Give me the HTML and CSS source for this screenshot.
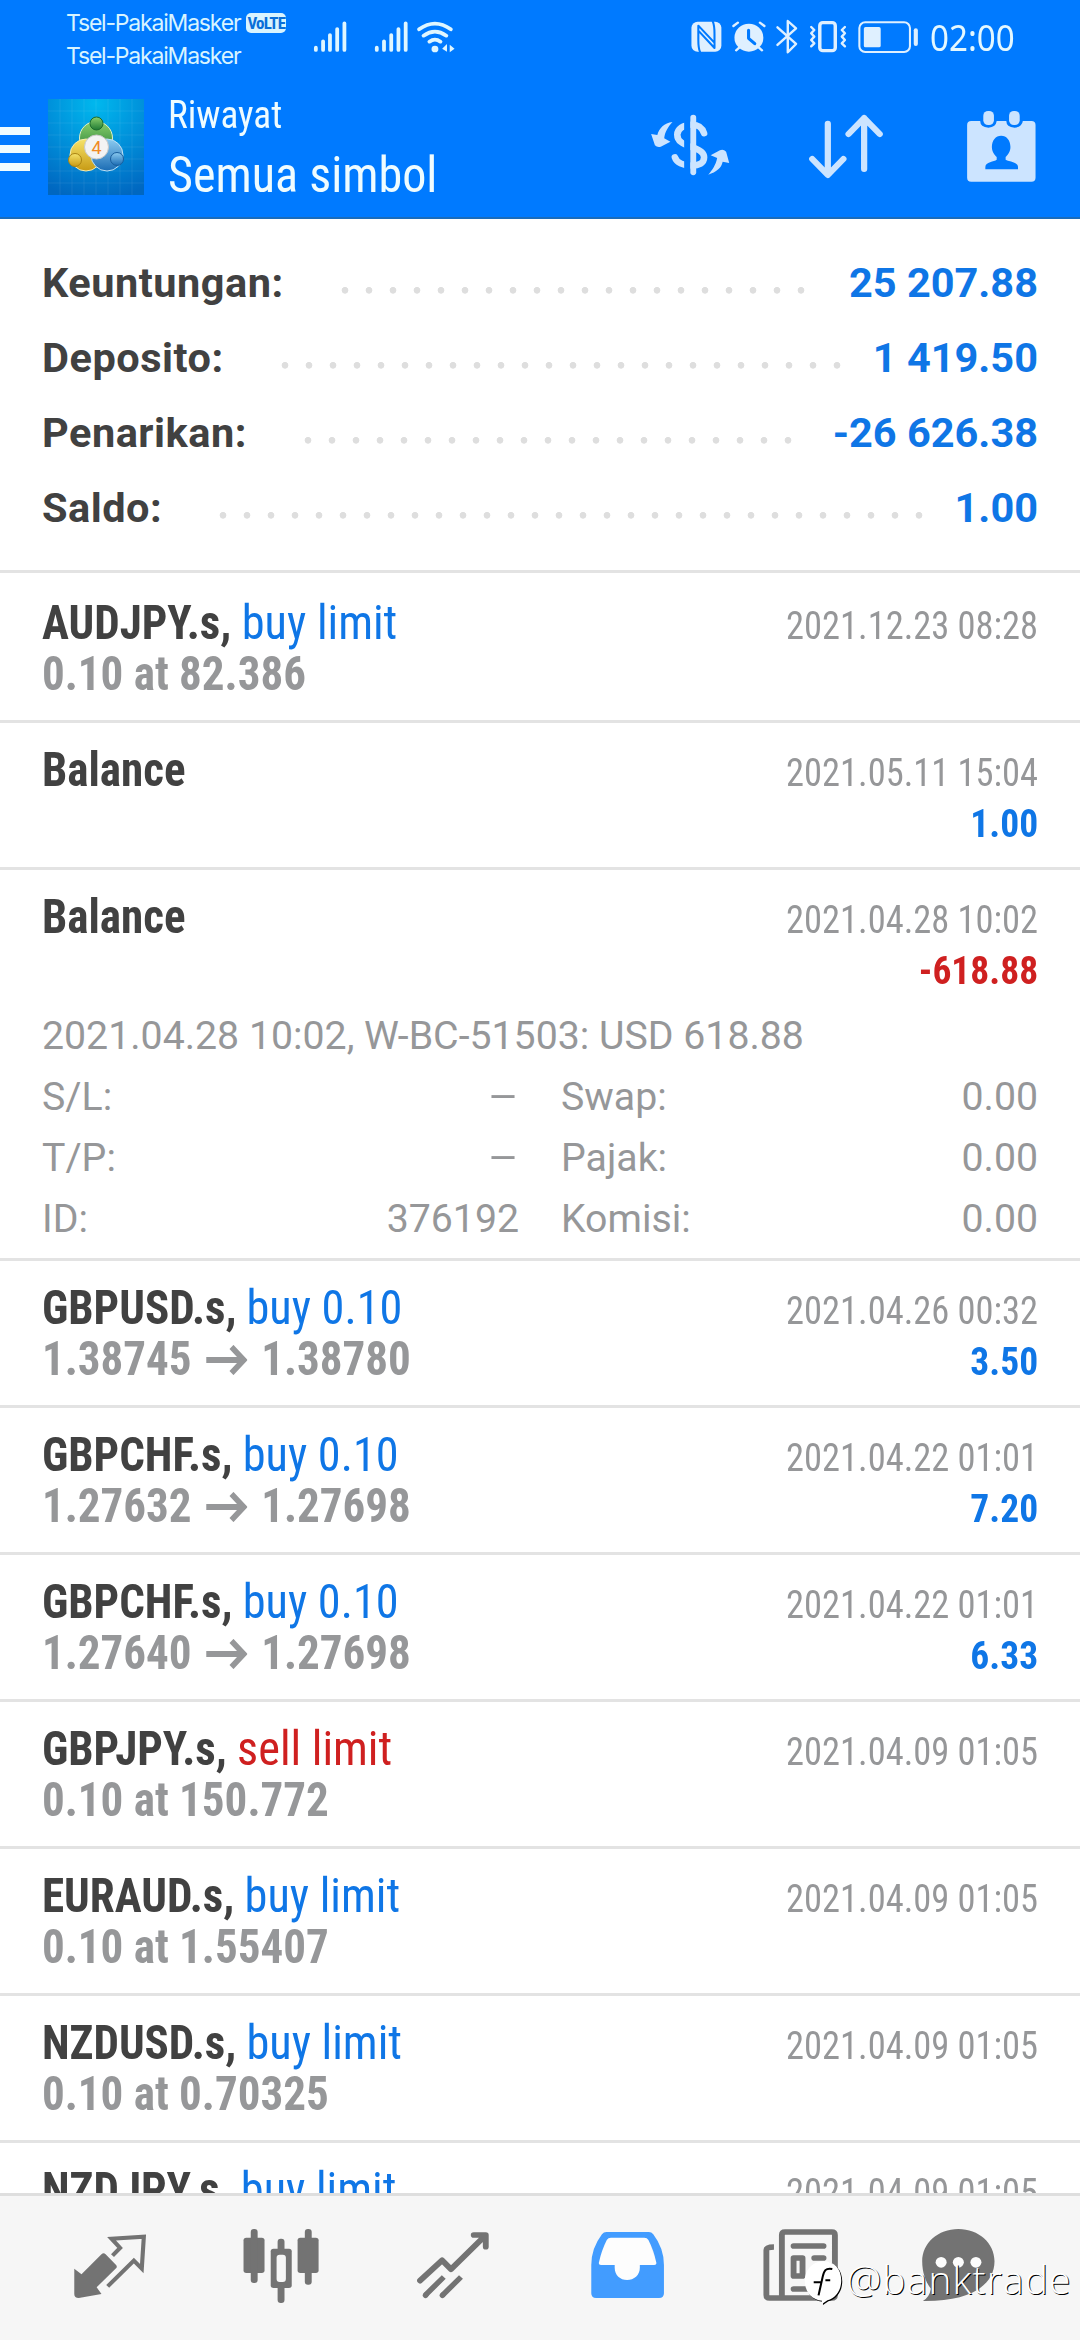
FILE: index.html
```html
<!DOCTYPE html>
<html lang="id">
<head>
<meta charset="utf-8">
<title>Riwayat</title>
<link rel="stylesheet" href="styles.css">
</head>
<body>
<div class="screen">
<header class="top">
  <div class="status">
    <div class="carriers">
      <div class="carrier"><span>Tsel-PakaiMasker</span><span class="volte">VoLTE</span></div>
      <div class="carrier"><span>Tsel-PakaiMasker</span></div>
    </div>
    <svg class="signals" viewBox="900 55 430 110" preserveAspectRatio="none" fill="none" stroke="#dff6ff" stroke-linecap="round" stroke-width="11">
      <path d="M917 144v7M938 125v26M958 106v45M979 88v63M1000 71v80M1094 144v7M1115 125v26M1136 106v45M1157 88v63M1178 71v80"/>
      <path d="M1217 89Q1263 55 1309 89M1230 108Q1263 84 1296 108M1247 126Q1263 114 1279 126"/>
      <circle cx="1263" cy="148" r="10" fill="#dff6ff" stroke="none"/>
      <path d="M1284 147l14-14v23zM1320 147l-14-12v23z" fill="#dff6ff" stroke="none"/>
    </svg>
    <svg class="sysicons" viewBox="430 55 680 115" preserveAspectRatio="none" fill="none" stroke="#dff0ff" stroke-linecap="round" stroke-linejoin="round" stroke-width="7">
      <rect x="440" y="66" width="87" height="90" rx="18" fill="#dff0ff" stroke="none"/>
      <path d="M465 157Q460 145 460 120V78L506 128M502 65Q507 77 507 102V145L462 95" stroke="#007aff" stroke-width="6"/>
      <circle cx="607" cy="114" r="42" fill="#dff0ff" stroke="none"/>
      <path d="M562 79l13-10M652 79l-13-10M570 152l8-7M645 152l-8-7"/>
      <path d="M606 92v24l18 16" stroke="#007aff" stroke-width="9"/>
      <path d="M690 83l54 50-24 25V64l24 22-54 50"/>
      <rect x="813" y="69" width="45" height="84" rx="9" stroke-width="10"/>
      <path d="M788 82l9 9-9 10 9 10-9 10 9 10-9 9M886 82l-9 9 9 10-9 10 9 10-9 10 9 9"/>
      <rect x="928" y="68" width="147" height="89" rx="17" stroke-width="6"/>
      <rect x="941" y="82" width="49" height="61" rx="5" fill="#dff0ff" stroke="none"/>
      <path d="M1092 92v41" stroke-width="12"/>
    </svg>
    <span class="clock">02:00</span>
  </div>
  <div class="appbar">
    <div class="menu"><i></i><i></i><i></i></div>
    <svg class="logo" viewBox="0 0 96 96">
      <defs>
        <radialGradient id="bg" cx=".5" cy=".05" r="1"><stop offset="0" stop-color="#00b8ee"/><stop offset=".55" stop-color="#008cd8"/><stop offset="1" stop-color="#0067c0"/></radialGradient>
        <linearGradient id="gr" x2="0" y2="1"><stop stop-color="#8bd06c"/><stop offset="1" stop-color="#1f7a34"/></linearGradient>
        <linearGradient id="ye" x2="0" y2="1"><stop stop-color="#f6e36a"/><stop offset="1" stop-color="#c79a14"/></linearGradient>
        <linearGradient id="bl" x2="0" y2="1"><stop stop-color="#8ccbf0"/><stop offset="1" stop-color="#1b6cb4"/></linearGradient>
      </defs>
      <rect width="96" height="96" fill="url(#bg)"/>
      <path d="M12 0v96M24 0v96M36 0v96M48 0v96M60 0v96M72 0v96M84 0v96M0 12h96M0 24h96M0 36h96M0 48h96M0 60h96M0 72h96M0 84h96" stroke="#fff" stroke-opacity=".07"/>
      <g stroke-width="1">
        <circle cx="48" cy="39" r="16.500" fill="url(#gr)" stroke="#dff0c8"/>
        <circle cx="38" cy="56" r="16" fill="url(#ye)" stroke="#f5ecb0"/>
        <circle cx="59" cy="56" r="16" fill="url(#bl)" stroke="#bfe2f5"/>
        <circle cx="48.500" cy="24.500" r="6.500" fill="url(#gr)" stroke="#1c6a2c"/>
        <circle cx="27" cy="61" r="6.500" fill="url(#ye)" stroke="#a98312"/>
        <circle cx="69" cy="60" r="6.500" fill="url(#bl)" stroke="#185d9c"/>
        <circle cx="48.500" cy="48" r="12" fill="#f3f3f3" stroke="#c8c8c8"/>
      </g>
      <text x="48.500" y="54.500" text-anchor="middle" class="logo-digit">4</text>
    </svg>
    <div class="titles">
      <div class="t1"><span class="cond">Riwayat</span></div>
      <div class="t2"><span class="cond">Semua simbol</span></div>
    </div>
    <svg class="act dollar" viewBox="310 330 250 220" preserveAspectRatio="none">
      <path d="M476 400C470 380 455 374 440 374C415 374 398 388 398 404C398 424 415 432 436 440C462 448 476 458 476 472C476 490 460 497 440 497C415 497 396 488 391 472" fill="none" stroke="#cce4ff" stroke-width="19" stroke-linecap="round"/>
      <path d="M418 340h18v200h-18z" fill="#007aff"/>
      <path d="M444.500 353v164" stroke="#cce4ff" stroke-width="17" stroke-linecap="round"/>
      <path d="M384 366C360 368 345 385 340 405L322 402L333 436Q340 443 350 440L378 425L360 415C362 395 372 380 384 366ZM488 524C512 515 526 505 530 485L549 489L540 455Q532 447 522 451L495 466L514 474C510 495 500 510 488 524Z" fill="#cce4ff"/>
    </svg>
    <svg class="act sort" viewBox="770 330 240 220" preserveAspectRatio="none" fill="none" stroke="#cce4ff" stroke-width="18" stroke-linecap="round" stroke-linejoin="round">
      <path d="M836 371V524M791 477l45 48 45-48M941 507V354M896 402l45-48 45 48"/>
    </svg>
    <svg class="act cal" viewBox="1230 320 224 240" preserveAspectRatio="none" fill="#cce4ff">
      <path d="M1254 362h26q0 18 24 20 22-2 24-20h28q0 18 24 20 22-2 24-20h25q12 0 12 12v158q0 12-12 12h-175q-12 0-12-12v-158q0-12 12-12z"/>
      <rect x="1289" y="332" width="31" height="42" rx="14"/><rect x="1364" y="332" width="31" height="42" rx="14"/>
      <path d="M1341 406c16 0 27 14 27 34 0 14-8 24-14 30v8c10 6 36 6 36 22v7h-95v-7c0-16 26-16 33-22v-8c-6-6-14-16-14-30 0-20 11-34 27-34z" fill="#007aff"/>
    </svg>
  </div>
</header>

<section class="stats">
  <div class="stat"><span>Keuntungan:</span><i class="dots"></i><b>25 207.88</b></div>
  <div class="stat"><span>Deposito:</span><i class="dots"></i><b>1 419.50</b></div>
  <div class="stat"><span>Penarikan:</span><i class="dots"></i><b>-26 626.38</b></div>
  <div class="stat"><span>Saldo:</span><i class="dots"></i><b>1.00</b></div>
</section>

<main class="list">
  <article class="row first"><div class="main"><div class="l"><div><b>AUDJPY.s,</b> <span class="buy">buy limit</span></div><div class="price">0.10 at 82.386</div></div><div class="r"><div>2021.12.23 08:28</div></div></div></article>
  <article class="row"><div class="main"><div class="l"><div><b>Balance</b></div></div><div class="r"><div>2021.05.11 15:04</div><div class="amt">1.00</div></div></div></article>
  <article class="row open"><div class="main"><div class="l"><div><b>Balance</b></div></div><div class="r"><div>2021.04.28 10:02</div><div class="amt neg">-618.88</div></div></div>
    <div class="detail">
      <div class="note">2021.04.28 10:02, W-BC-51503: USD 618.88</div>
      <div class="kv"><span>S/L:</span><span class="dash">–</span></div><div class="kv"><span>Swap:</span><span>0.00</span></div>
      <div class="kv"><span>T/P:</span><span class="dash">–</span></div><div class="kv"><span>Pajak:</span><span>0.00</span></div>
      <div class="kv"><span>ID:</span><span>376192</span></div><div class="kv"><span>Komisi:</span><span>0.00</span></div>
    </div>
  </article>
  <article class="row"><div class="main"><div class="l"><div><b>GBPUSD.s,</b> <span class="buy">buy 0.10</span></div><div class="price">1.38745 <svg class="arrow" viewBox="0 0 44 30"><path d="M0 15h40M27 2l13 13-13 13"/></svg> 1.38780</div></div><div class="r"><div>2021.04.26 00:32</div><div class="amt">3.50</div></div></div></article>
  <article class="row"><div class="main"><div class="l"><div><b>GBPCHF.s,</b> <span class="buy">buy 0.10</span></div><div class="price">1.27632 <svg class="arrow" viewBox="0 0 44 30"><path d="M0 15h40M27 2l13 13-13 13"/></svg> 1.27698</div></div><div class="r"><div>2021.04.22 01:01</div><div class="amt">7.20</div></div></div></article>
  <article class="row"><div class="main"><div class="l"><div><b>GBPCHF.s,</b> <span class="buy">buy 0.10</span></div><div class="price">1.27640 <svg class="arrow" viewBox="0 0 44 30"><path d="M0 15h40M27 2l13 13-13 13"/></svg> 1.27698</div></div><div class="r"><div>2021.04.22 01:01</div><div class="amt">6.33</div></div></div></article>
  <article class="row"><div class="main"><div class="l"><div><b>GBPJPY.s,</b> <span class="sell">sell limit</span></div><div class="price">0.10 at 150.772</div></div><div class="r"><div>2021.04.09 01:05</div></div></div></article>
  <article class="row"><div class="main"><div class="l"><div><b>EURAUD.s,</b> <span class="buy">buy limit</span></div><div class="price">0.10 at 1.55407</div></div><div class="r"><div>2021.04.09 01:05</div></div></div></article>
  <article class="row"><div class="main"><div class="l"><div><b>NZDUSD.s,</b> <span class="buy">buy limit</span></div><div class="price">0.10 at 0.70325</div></div><div class="r"><div>2021.04.09 01:05</div></div></div></article>
  <article class="row"><div class="main"><div class="l"><div><b>NZDJPY.s,</b> <span class="buy">buy limit</span></div></div><div class="r"><div>2021.04.09 01:05</div></div></div></article>
</main>

<nav class="nav">
  <svg viewBox="70 300 500 270" preserveAspectRatio="none" fill="#737373">
    <path d="M216 446l21 17 58-60q6-6 12 0l31 33q3 4 0 8l-57 58 14 20-66 12q-13 0-13-12z"/>
    <path d="M327 407l22-23-25-28 94-6-6 96-23-24-76 77" fill="none" stroke="#737373" stroke-width="12"/>
  </svg>
  <svg viewBox="570 300 500 270" preserveAspectRatio="none" fill="#737373">
    <rect x="708" y="353" width="61" height="106" rx="8"/><rect x="729" y="327" width="20" height="162" rx="9"/>
    <rect x="865" y="353" width="61" height="106" rx="8"/><rect x="886" y="327" width="20" height="167" rx="9"/>
    <rect x="807" y="356" width="20" height="193" rx="9"/><rect x="787" y="386" width="61" height="118" rx="8"/>
    <rect x="804" y="404" width="27" height="82" rx="9" fill="#f6f6f6"/>
  </svg>
  <svg viewBox="1070 300 500 270" preserveAspectRatio="none" fill="none" stroke="#737373" stroke-width="16" stroke-linejoin="round">
    <path d="M1221 482L1285 421L1311 448L1410 347M1377 345H1412V380" stroke-linecap="round" stroke-width="17"/>
    <path d="M1290 471l-54 55M1340 471l-54 55"/><path d="M1238 525l-1 1M1287 525l-1 1" stroke-linecap="round"/>
  </svg>
  <svg viewBox="0 300 500 270" preserveAspectRatio="none" fill="#429cff">
    <path fill="#fdfdfd" d="M195 350H308L340 440H290L280 484H220L210 440H160Z"/>
    <path fill-rule="evenodd" d="M190 336H313Q321 336 326 343Q357 385 357 435V520Q357 534 343 534H160Q146 534 146 520V435Q146 385 177 343Q182 336 190 336ZM203 353Q195 353 191 360Q176 390 168 428Q167 435 174 435H214V443C214 465 230 480 250 480C270 480 287 465 287 443V435H329Q336 435 335 428Q327 390 312 360Q308 353 300 353Z"/>
  </svg>
  <svg viewBox="500 300 500 270" preserveAspectRatio="none" fill="none" stroke="#737373" stroke-width="17" stroke-linejoin="round">
    <path d="M700 534V345q0-9 9-9h136q9 0 9 9v180q0 9-9 9H664q-9 0-9-9V390q0-9 22-9" />
    <path d="M734 378h87M794 414h27" stroke-linecap="round"/>
    <rect x="734" y="414" width="26" height="54"/><path d="M734 507h87" stroke-linecap="round"/>
  </svg>
  <svg viewBox="1000 300 500 270" preserveAspectRatio="none" fill="#737373">
    <path d="M1213 327C1272 327 1318 369 1318 424C1318 500 1240 545 1110 543Q1130 530 1133 506C1118 485 1108 458 1108 424C1108 369 1154 327 1213 327Z"/>
    <g fill="#fdfdfd"><circle cx="1163" cy="427" r="16"/><circle cx="1213" cy="427" r="16"/><circle cx="1264" cy="427" r="16"/></g>
  </svg>
</nav>
<div class="mark">
  <svg viewBox="760 415 122 145" preserveAspectRatio="none"><path d="M822 425c32 0 52 24 52 57s-18 55-40 61l-16 11 0-10c-30-2-50-28-50-60s22-59 54-59z" fill="#fff"/><path d="M848 448c-20-4-24 6-28 24l-12 56M794 488h20M828 482h14" fill="none" stroke="#000" stroke-width="6"/></svg>
  <span>@banktrade</span>
</div>
</div>
</body>
</html>
```
FILE: styles.css
```css
* { box-sizing: border-box; }
body { margin: 0; background: #fff; }
.screen {
  position: relative;
  width: 1080px;
  height: 2340px;
  overflow: hidden;
  display: flex;
  flex-direction: column;
  font-family: Roboto, "Liberation Sans", sans-serif;
  color: #414141;
}
svg { display: block; flex: none; }
.cond, .l, .r { font-family: "Roboto Condensed", Roboto, sans-serif; font-stretch: 75%; }

.top { flex: none; height: 219px; background: #007aff; border-bottom: 2px solid #1a6cbb; color: #effcff; }
.status { display: flex; height: 73px; }
.carriers { width: 244px; margin-left: 66px; padding-top: 7px; flex: none; }
.carrier { display: flex; align-items: center; height: 32.500px; font: 23px/32px Inter, sans-serif; letter-spacing: -1.200px; white-space: nowrap; color: #d8f4ff; }
.volte { margin-left: 6px; width: 40px; height: 20px; border-radius: 5px; background: #d8f4ff; color: #0a6fd8; font: bold 17px/20px "Roboto Condensed", Roboto, sans-serif; font-stretch: 75%; letter-spacing: -.8px; text-align: center; }
.signals { width: 148px; height: 36.700px; margin-top: 18.300px; }
.sysicons { width: 234px; height: 38.300px; margin: 18.300px 0 0 230px; }
.clock { margin: 17px 0 0 8px; font: 36px/42px "Noto Sans", sans-serif; color: #e4f8ff; transform: scaleX(.92); transform-origin: left; }

.appbar { display: flex; height: 144px; }
.menu { width: 30px; margin: 53.500px 18px 0 0; display: flex; flex-direction: column; gap: 9.500px; }
.menu i { height: 8.500px; background: #effcff; }
.logo { width: 96px; height: 96px; margin-top: 26px; }
.logo-digit { font: 18px Roboto, sans-serif; fill: #f08a24; }
.titles { width: 468px; margin: 18px 0 0 24px; white-space: nowrap; }
.titles div { transform-origin: left; }
.t1 { font-size: 39px; line-height: 48px; transform: scaleX(.955); }
.t2 { font-size: 50px; line-height: 72px; transform: scaleX(.963); }
.act { margin-top: 37px; }
.dollar { width: 86px; height: 73.300px; margin-left: 11px; }
.sort { width: 83px; height: 73.300px; margin-left: 72px; }
.cal { width: 77px; height: 80px; margin: 33.700px 0 0 75px; }

.stats { flex: none; height: 351px; padding: 26px 42px 0 42px; }
.stat { display: flex; height: 75px; font-size: 41.500px; line-height: 75px; font-weight: 700; }
.stat span { letter-spacing: .5px; }
.stat b { color: #0f76e6; font-weight: 700; }
.dots { flex: 1; margin: 0 28px 0 41px; background: radial-gradient(circle 3.700px at 20px 45.300px, #dedede 3px, transparent 3.700px) 0 0 / 24px 75px repeat-x; }

.list { flex: 1; min-height: 0; overflow: hidden; }
.row { height: 147px; padding: 21px 42px 0; border-top: 3px solid #e3e3e3; white-space: nowrap; }
.row.first { height: 150px; padding-top: 24px; }
.row.open { height: 391px; }
.main { display: flex; justify-content: space-between; height: 102px; }
.l { font-size: 48px; line-height: 51px; transform: scaleX(.938); transform-origin: left; }
.l b { font-weight: 700; }
.price { color: #969799; font-weight: 700; }
.buy, .sell { display: inline-block; transform: scaleX(1.028); transform-origin: left; }
.buy { color: #0f76e6; }
.sell { color: #cf2020; }
.arrow { display: inline-block; width: 44px; height: 30px; margin: 0 4px; fill: none; stroke: #969799; stroke-width: 6px; }
.r { padding-top: 3px; font-size: 39.500px; line-height: 51px; text-align: right; color: #969799; }
.r div { transform: scaleX(.923); transform-origin: right; }
.r .amt { font-weight: 700; color: #0f76e6; transform: scaleX(.95); }
.r .neg { color: #cf2020; }
.detail { margin-top: 13px; display: grid; grid-template-columns: 1fr 1fr; column-gap: 42px; font-size: 39.250px; line-height: 61px; color: #969799; }
.note { grid-column: 1 / -1; }
.kv { display: flex; justify-content: space-between; }
.dash { transform: scaleX(1.2); transform-origin: right; }

.nav { flex: none; height: 147px; display: flex; padding-left: 24px; background: #f6f6f6; border-top: 3px solid #dedede; }
.nav svg { width: 172.200px; height: 90px; margin-top: 24px; }
.mark { position: absolute; left: 801.700px; top: 2258px; display: flex; color: #fff; font: 300 39px/42px "Open Sans", "Noto Sans", sans-serif; }
.mark svg { width: 42px; height: 48px; filter: drop-shadow(1px 1px 0 #000); }
.mark span { margin-left: 3px; letter-spacing: 1.100px; text-shadow: 1px 1px 0 #000; }
```
